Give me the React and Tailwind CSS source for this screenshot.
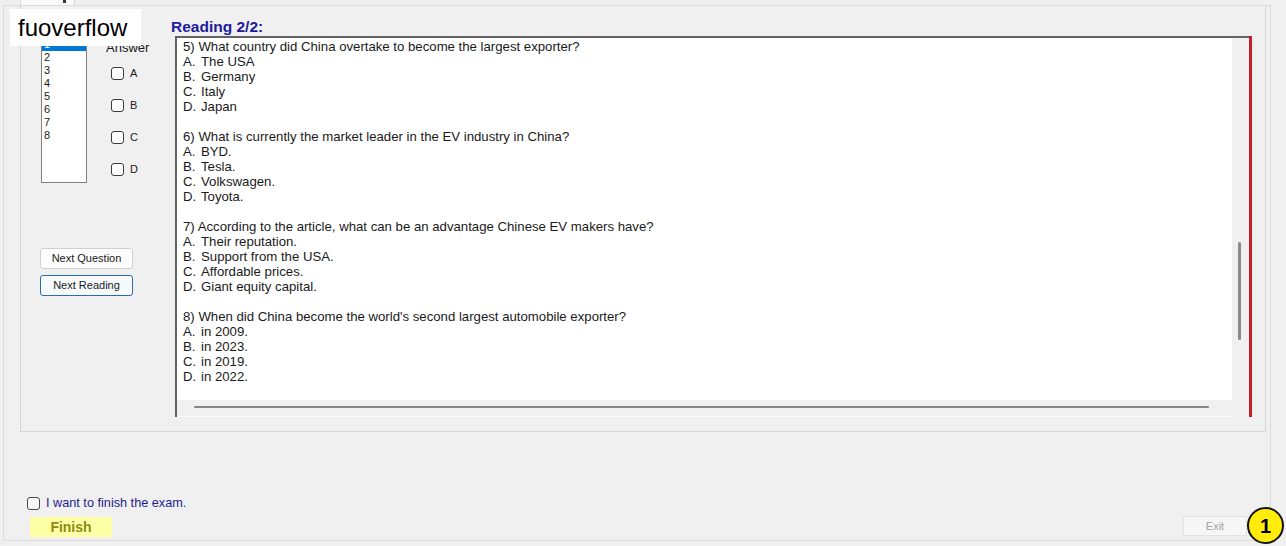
const questions = [
  {
    q: '5) What country did China overtake to become the largest exporter?',
    a: ['The USA', 'Germany', 'Italy', 'Japan'],
  },
  {
    q: '6) What is currently the market leader in the EV industry in China?',
    a: ['BYD.', 'Tesla.', 'Volkswagen.', 'Toyota.'],
  },
  {
    q: '7) According to the article, what can be an advantage Chinese EV makers have?',
    a: ['Their reputation.', 'Support from the USA.', 'Affordable prices.', 'Giant equity capital.'],
  },
  {
    q: "8) When did China become the world's second largest automobile exporter?",
    a: ['in 2009.', 'in 2023.', 'in 2019.', 'in 2022.'],
  },
];

const letters = ['A', 'B', 'C', 'D'];

const Box = () => (
  <span className="block h-[13px] w-[13px] shrink-0 rounded-[3px] border border-[#3a3a3a] bg-white" />
);

const App = () => {
  return (
    <div className="relative h-[546px] w-[1286px] overflow-hidden bg-[#f0f0f0] font-['Liberation_Sans',Arial,sans-serif] text-[#1a1a1a]">
      {/* tab header */}
      <div className="h-[5px]">
        <div className="ml-[20px] h-[5px] w-[55px] border-x border-[#dadada] bg-[#fafafa]">
          <div className="ml-[42px] h-[3px] w-[3px] bg-[#333]" />
        </div>
      </div>

      {/* tab page */}
      <div className="ml-[3px] h-[536px] w-[1268px] border border-[#dcdcdc]">
        {/* group box */}
        <div className="ml-[16px] flex h-[426px] w-[1246px] border-x border-b border-[#d6d6d6]">
          {/* left column */}
          <div className="w-[150px] shrink-0 pl-[19px] pt-[31px]">
            <div className="flex">
              <div className="ml-[1px] h-[146px] w-[46px] overflow-hidden border border-[#828282] bg-white text-[11px] leading-[13px]">
                {[1, 2, 3, 4, 5, 6, 7, 8].map((n) => (
                  <div key={n} className={n === 1 ? 'bg-[#0078d7] pl-[2px] text-white' : 'pl-[2px]'}>
                    {n}
                  </div>
                ))}
              </div>
              <div className="ml-[19px] pt-[3px]">
                <div className="h-[15px] text-[13px] leading-[15px]">Answer</div>
                <div className="mt-[12px] flex flex-col gap-[19px]">
                  {letters.map((l) => (
                    <div key={l} className="ml-[5px] flex h-[13px] items-center">
                      <Box />
                      <span className="ml-[6px] text-[11px] leading-[13px]">{l}</span>
                    </div>
                  ))}
                </div>
              </div>
            </div>

            <div className="mt-[65px] flex flex-col gap-[6px]">
              <button className="h-[21px] w-[93px] rounded-[3px] border border-[#d0d0d0] bg-[#fdfdfd] text-[11px] leading-none">
                Next Question
              </button>
              <button className="h-[21px] w-[93px] rounded-[3px] border border-[#2b6cb0] bg-[#f7fafd] text-[11px] leading-none">
                Next Reading
              </button>
            </div>
          </div>

          {/* reading column */}
          <div className="pt-[11px]">
            <div className="h-[19px] text-[15.5px] font-bold leading-[19px] text-[#1c1c9c]">Reading 2/2:</div>
            <div className="ml-[4px] flex h-[381px] w-[1077px]">
              <div className="flex h-full w-[1074px] border-l-2 border-t-2 border-[#646464]">
                <div className="flex w-[1055px] flex-col">
                  <div className="h-[362px] bg-white pl-[6px] pt-[1px] text-[13.2px] leading-[15px]">
                    {questions.map((item, i) => (
                      <div key={i} className={i > 0 ? 'mt-[15px]' : ''}>
                        <div>{item.q}</div>
                        {item.a.map((ans, j) => (
                          <div key={j}>
                            <span className="inline-block w-[18px]">{letters[j]}.</span>
                            {ans}
                          </div>
                        ))}
                      </div>
                    ))}
                  </div>
                  <div className="h-[17px] border-b border-[#fafafa] pt-[6px]">
                    <div className="ml-[17px] h-[2px] w-[1015px] rounded-full bg-[#858585]" />
                  </div>
                </div>
                <div className="w-[17px] bg-[#f0f0f0] pl-[6px] pt-[204px]">
                  <div className="h-[98px] w-[3px] rounded-full bg-[#8a8a8a]" />
                </div>
              </div>
              <div className="h-full w-[3px] bg-[#c2202b]" />
            </div>
          </div>
        </div>

        {/* bottom */}
        <div className="ml-[23px] mt-[65px] flex h-[13px] items-center">
          <span className="block h-[13px] w-[13px] rounded-[3px] border border-[#4a4a4a] bg-[#f7f7f7]" />
          <span className="ml-[6px] text-[12.7px] leading-[13px] text-[#1e1e8c]">I want to finish the exam.</span>
        </div>
        <div className="mt-[7px] flex items-start justify-between">
          <div className="ml-[26px] flex h-[20px] w-[82px] items-center justify-center bg-[#ffffa6] text-[14px] font-bold text-[#8c8c10]">
            Finish
          </div>
          <div className="mr-[23px] -mt-[1px] flex h-[20px] w-[64px] items-center justify-center border border-[#e3e3e3] bg-[#f6f6f6] text-[11px] text-[#a3a3a3]">
            Exit
          </div>
        </div>
      </div>

      {/* watermark */}
      <div className="absolute left-[10px] top-[9px] flex h-[37px] w-[131px] items-center bg-white pl-[8px] text-[24px] leading-none text-black">
        fuoverflow
      </div>

      {/* badge */}
      <div className="absolute left-[1247px] top-[507px] flex h-[37px] w-[37px] items-center justify-center rounded-full border-2 border-[#111] bg-[#ffec0a] text-[20px] font-bold text-black">
        1
      </div>
    </div>
  );
};

export default App;
